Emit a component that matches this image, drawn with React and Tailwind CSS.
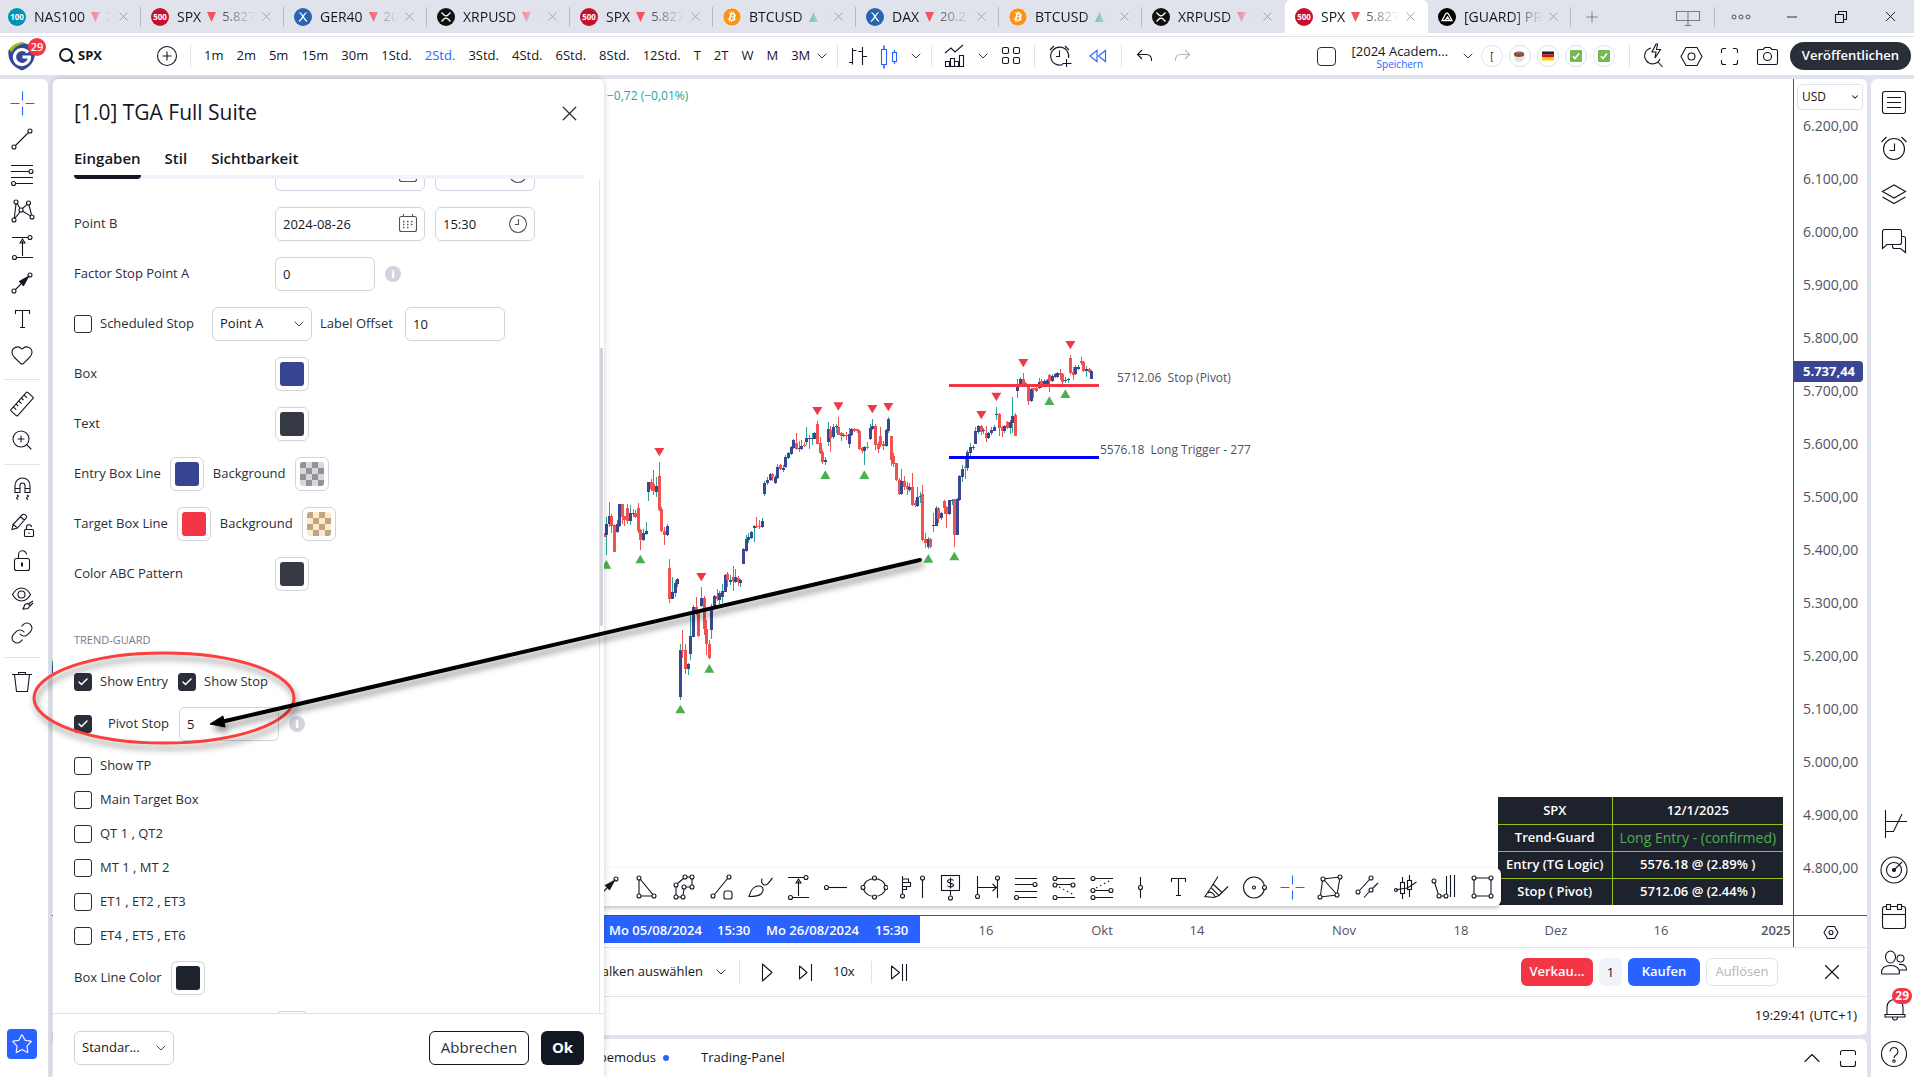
import React, { useState } from 'react';
import { Heart, ZoomIn, Link, Star, X, ChevronDown, ChevronUp, Check, Minus, Plus } from 'lucide-react';
import { FaBitcoin } from 'react-icons/fa';

// =====================================
// ICONS (28 x 28 grid)
// =====================================

const Node = ({ x, y, r = 2 }) => <circle cx={x} cy={y} r={r} />;

const ICONS = {
  cross: <path d="M14.5 2.5v9M14.5 17.5v9M2.5 14.5h9M17.5 14.5h9" />,
  line: <><Node x="22" y="6" /><Node x="6" y="22" /><path d="M7.5 20.5L20.5 7.5" /></>,
  fib: <><path d="M3 4.500h22M3 10.500h18M3 16.500h22M8 22.500h17" /><Node x="23" y="10.500" /><Node x="5.500" y="22.500" /></>,
  pattern: <><Node x="8" y="5" /><Node x="20.500" y="6" /><Node x="13" y="13" /><Node x="6" y="23" /><Node x="24" y="20" /><path d="M8 7L6.300 21M9.200 6.700L12 11.300M14.500 11.500L19 7.400M21 8L23.500 18M14.800 14.200L22.300 18.900M12 15L7 21.200" /></>,
  measure: <><path d="M4 4.500h16M8.500 24.500H25M14.500 23V8M12 10l2.500-4 2.500 4z" /><Node x="22" y="4.500" /><Node x="6.500" y="24.500" /></>,
  arrow: <><Node x="22" y="6" /><Node x="6" y="22" /><path d="M7.500 20.500L14 14" /><path d="M20.500 7.500l-9 5 4 4z" fill="currentColor" /></>,
  text: <path d="M7.500 9V5.500h14V9M14.500 5.500v17M12 22.500h5" />,
  ruler: <g transform="rotate(-48 14 14)"><rect x="1.500" y="9.500" width="25" height="9" rx="1" /><path d="M6 9.500v4M10 9.500v3M14 9.500v4M18 9.500v3M22 9.500v4" /></g>,
  magnet: <path d="M7 17.500V10.500a7.500 7.500 0 0 1 15 0v7h-5v-7a2.500 2.500 0 0 0-5 0v7zM7 13.500h5M17 13.500h5M9 20l1.500 1-2 2 1.500 2M19 20l1.500 1-2 2 1.500 2" />,
  pencilLock: <><path d="M4 18.500l1-5L14.500 3.500c2-1 4.500 1 4 3L9.500 17 4 18.500zM12.500 6l4 3M5 13.500l4 3" /><rect x="16.500" y="18.500" width="9" height="7" rx="1" /><path d="M18.500 18.500v-2a2.500 2.500 0 0 1 5-.5M21 21.500v1.500" /></>,
  lock: <><rect x="6.500" y="11.500" width="15" height="12" rx="2" /><path d="M10.500 11.500V8a4 4 0 0 1 8-.5" /><path d="M14 15.500v4" strokeWidth="2" /></>,
  eye: <><path d="M4.500 11.500C7 7 10 5 13.500 5s6.500 2 9 6.500c-2.500 4.500-5.500 6.500-9 6.500s-6.500-2-9-6.500z" /><circle cx="13.500" cy="11.500" r="3.500" /><path d="M15 26l2-4.500 3-1 2 2-2 3zM21 20.500l4-2.500M22 23l3-3" /></>,
  trash: <path d="M4 6.500h20M10.500 6.500v-2h7v2M6.500 6.500l2 17h11l2-17" />,
  triangle: <><Node x="7" y="5" /><Node x="7" y="23" /><Node x="22" y="23" /><path d="M7 7v14M9 23h11M8.500 6.500L20.700 21.300" /></>,
  path: <><Node x="15" y="4" /><Node x="22" y="4" /><Node x="6" y="12" /><Node x="22" y="14" /><Node x="14" y="14" /><Node x="6" y="24" /><Node x="13" y="24" /><path d="M17 4h3M22 6v6M13.500 5.500L7.500 10.500M16 14h4M6 14v8M8 24h3M13 22l1-6" /></>,
  shapeLine: <><Node x="21" y="4" /><Node x="5" y="23" /><path d="M6.500 21.500L19.500 5.500" /><rect x="16" y="18" width="8" height="8" rx="2" /></>,
  brush: <path d="M3 23.500c1-4 4-11 10-10.500 5 .5 5 5 2 8-3 2.500-7 2.500-12 2.500zM16 5.500c-1 4 0 6 2.500 6.500 4 .5 5-4 8-7" />,
  hline: <><Node x="4.500" y="14.500" /><path d="M7 14.500h18" /></>,
  ellipse: <><ellipse cx="14.500" cy="14.500" rx="11" ry="9" /><g fill="#fff"><Node x="3" y="14.500" /><Node x="26" y="14.500" /><Node x="14.500" y="5" /><Node x="14.500" y="24" /></g></>,
  volume: <><path d="M4.500 3v18M4.500 6h6v3.500h-6M4.500 9.500h8v4h-8M4.500 13.500h4v3h-4M24.500 7v18" /><Node x="4.500" y="23" /><Node x="24.500" y="5" /></>,
  note: <><rect x="5.500" y="2.500" width="18" height="15" /><path d="M14.500 17.500v5" /><Node x="14.500" y="25" /><path d="M17.500 7.500c-1-1.500-6-1.500-6 .8s6 1.500 6 3.800-5 2.300-6 .6M14.500 4.500v11" /></>,
  range: <><path d="M3.500 3v18M23.500 7v18M4 14.500h18M18.500 11l4 3.500-4 3.500" /><Node x="3.500" y="23.500" /><Node x="23.500" y="5" /></>,
  lines2: <><path d="M3 5.500h22M3 11.500h18M3 18.500h22M7 24.500h18" /><Node x="23" y="11.500" /><Node x="4.500" y="24.500" /></>,
  channelA: <><path d="M7 5.500h18M7 11.500h14M7 24.500h18" /><path strokeDasharray="1.500 3" d="M9 14l15 8" /><Node x="5" y="5.500" /><Node x="5" y="12" /><Node x="23" y="12" /><Node x="5" y="24.500" /></>,
  channelB: <><path d="M7 5.500h18M7 17.500h14M7 24.500h18" /><path strokeDasharray="1.500 3" d="M8 15l15-8" /><Node x="5" y="5.500" /><Node x="5" y="17.500" /><Node x="23" y="17.500" /><Node x="5" y="24.500" /></>,
  vline: <><Node x="14.500" y="14.500" /><path d="M14.500 4v8.500M14.500 16.500V25" /></>,
  highlighter: <path d="M3 23.500l6-9 8 8-5 2zM9 14.500L16 3.500M17 22.500l9-9M6 20c2-2 6 0 7 4M11.500 11.500l8.500 8" />,
  target: <><circle cx="14" cy="14.500" r="10.500" /><circle cx="14" cy="14.500" r="1.500" /><g fill="#fff"><Node x="24.500" y="14.500" /></g></>,
  quad: <><Node x="7" y="6" /><Node x="24" y="4" /><Node x="4" y="24" /><Node x="21" y="22" /><path d="M9 5.800L22 4.200M6.500 8L4.500 22M23.700 6L21.300 20M6 23.800l13-1.600M8.500 7.500L20 20.500" /></>,
  parallel: <><Node x="17" y="5" /><Node x="4" y="19" /><Node x="17" y="17" /><path d="M15.500 6.500L5.500 17.500M18.500 15.500L24 10M15.500 18.500L10 24.500" /></>,
  candleTool: <><rect x="8.500" y="9.500" width="4" height="11" /><rect x="15.500" y="7.500" width="4" height="9" /><path d="M10.500 4v5.500M10.500 20.500V26M17.500 2v5.500M17.500 16.500V24M4 17l4.500-1 7-1 9-6" /><Node x="4" y="17" r="1.500" /></>,
  cycles: <><Node x="4" y="8" /><Node x="9" y="23" /><Node x="16" y="23" /><path d="M4.700 10l3.600 11M11 23h3M16.500 21V3M20.500 2v22M24.500 2v22" /></>,
  rect: <><Node x="6" y="5" /><Node x="23" y="5" /><Node x="6" y="23" /><Node x="23" y="23" /><path d="M8 5h13M8 23h13M6 7v14M23 7v14" /></>,
  bars: <path d="M7.500 22.500V6M7.500 20.500H4M7.500 8.500h4M17.500 5v18M17.500 9.500h-4M17.500 14.500H22" />,
  candles: <><rect x="5.500" y="7.500" width="5" height="15" /><path d="M8 3.500v4M8 22.500v4" strokeWidth="1.600" /><rect x="16.500" y="10.500" width="4" height="9" /><path d="M18.500 8v2.500M18.500 19.500V22" /></>,
  indicators: <path d="M4.500 24.500v-5h4v5M9.500 24.500v-8h4v8M13.500 24.500v-5h4v5M18.500 24.500v-11h4v11zM4 24.500h19M4 11l6-5 4 4 8-7" />,
  grid: <><rect x="5.500" y="5.500" width="6" height="6" rx="1.500" /><rect x="16.500" y="5.500" width="6" height="6" rx="1.500" /><rect x="5.500" y="15.500" width="6" height="6" rx="1.500" /><rect x="16.500" y="15.500" width="6" height="6" rx="1.500" /></>,
  alarmPlus: <><path d="M22.500 16A9 9 0 1 0 17 22.500M13.500 8.500v6H10M4 8l4-4M19 4l4 4M20.500 17v8M16.500 21.500h9" /></>,
  rewind: <path d="M13 8.500v11L6 14zM21.500 8.500v11L14.500 14z" />,
  undo: <path d="M11 8l-4.500 4.500L11 17M6.500 12.500h9a5 5 0 0 1 5 5V19" />,
  redo: <path d="M17 8l4.500 4.500L17 17M21.500 12.500h-9a5 5 0 0 0-5 5V19" />,
  quick: <><path d="M12 6a8 8 0 1 0 9 11M19 20l4.500 5" /><path d="M17 2l-4 8h4l-1 6 5.500-8.500h-4l1-5.500z" /></>,
  settings: <><path d="M9 5.500h11l5 9-5 9H9l-5-9z" strokeLinejoin="round" /><circle cx="14.500" cy="14.500" r="3.500" /></>,
  full: <path d="M6.500 11V8.500a2 2 0 0 1 2-2H11M18 6.500h2.500a2 2 0 0 1 2 2V11M22.500 18v2.500a2 2 0 0 1-2 2H18M11 22.500H8.500a2 2 0 0 1-2-2V18" />,
  camera: <><path d="M6 7.500h4l2-2h5l2 2h4a1.500 1.500 0 0 1 1.500 1.500v12a1.500 1.500 0 0 1-1.500 1.500H6A1.500 1.500 0 0 1 4.500 21V9A1.500 1.500 0 0 1 6 7.500z" /><circle cx="14.500" cy="14.500" r="4" /></>,
  list: <><rect x="2.500" y="3.500" width="23" height="22" rx="2.500" /><path d="M7 9.500h14M7 14.500h14M7 19.500h14" /></>,
  alarm: <><circle cx="14" cy="15" r="10.500" /><path d="M14.500 9.500v7H9.500M1.500 8l5-5M21.500 3l5 5" /></>,
  layers: <path d="M2.500 11.500L14 5l11.500 6.500L14 18zM2.500 17L14 23.500 25.500 17" />,
  chat: <path d="M4.500 3.500h15a2 2 0 0 1 2 2v11a2 2 0 0 1-2 2H7l-4.500 4v-17a2 2 0 0 1 2-2zM21.500 10.500h2a2 2 0 0 1 2 2v14l-5-4h-6a2 2 0 0 1-2-2v-2" />,
  dom: <path d="M5.500 0v28M5.500 11.500H27M5.500 21.500h8L22 4" />,
  radar: <><circle cx="14" cy="14" r="13" /><circle cx="14" cy="14" r="7.500" /><circle cx="14" cy="14" r="1.500" fill="currentColor" /><path d="M15 13l7-7" /></>,
  calendar: <><rect x="2.500" y="4.500" width="23" height="22" rx="2.500" /><path d="M2.500 12.500h23" /><rect x="6.500" y="2.500" width="4" height="5" fill="#fff" /><rect x="17.500" y="2.500" width="4" height="5" fill="#fff" /></>,
  people: <><ellipse cx="10.500" cy="9" rx="5" ry="6" /><circle cx="20.500" cy="10.500" r="3.500" /><path d="M1.500 25c0-5 3-7.500 9-7.500s9 2.500 9 7.500c0 .500-.5 1-1 1H2.500c-.5 0-1-.5-1-1zM19 16.500c5-.5 7.500 1.500 7.500 5.500h-7" /></>,
  bell: <path d="M7 20.500V13a7.500 7.500 0 0 1 8-7.500c4.500 0 8 3 8 7.500v7.500M5 20.500h20v2.500H5zM12.500 23.500a2.500 2.500 0 0 0 5 0" />,
  help: <><circle cx="14" cy="14" r="12.500" /><path d="M10 11.500a4 4 0 1 1 6 3.500c-1.500 1-2 1.500-2 3" /><circle cx="14" cy="21" r="1.200" /></>,
  play: <path d="M9.500 6v17L19 14.500z" strokeLinejoin="round" />,
  step: <path d="M8.500 8v13l7.500-6.500zM20.500 6v17" strokeLinejoin="round" />,
  goEnd: <path d="M7.500 8v13l8-6.500zM18.500 6v17M22.500 6v17" strokeLinejoin="round" />,
  maximize: <path d="M6.500 11V8.500a2 2 0 0 1 2-2h11a2 2 0 0 1 2 2V11M21.500 17v3.500a2 2 0 0 1-2 2h-11a2 2 0 0 1-2-2V17" />,
  layout: <path d="M2.500 8.500h23v9h-23zM14 8.500v14M10.500 22.500h7" />,
  restore: <path d="M8.500 11.500h8v8h-8zM11.500 11.500v-3h8v8h-3" />,
  search: <><circle cx="13" cy="13" r="6" strokeWidth="1.800" /><path d="M17.500 17.500l4 4" strokeWidth="1.800" /></>,
  addCircle: <><circle cx="14" cy="14" r="9.500" /><path d="M14 9.500v9M9.500 14h9" /></>,
  date: <><rect x="5.500" y="6.500" width="17" height="15" rx="2" /><path d="M9.500 4v2.500M18.500 4v2.500" /><path d="M9 11.500h11M9 14.500h11M9 17.500h8" strokeDasharray="1.500 2.500" strokeWidth="1.500" /></>,
  clock: <><circle cx="14" cy="14" r="8.500" /><path d="M14.500 9v5.500H11" /></>,
};

const Icon = ({ name, className = '' }) => (
  <svg
    className={`size-7 shrink-0 ${className}`}
    viewBox="0 0 28 28"
    fill="none"
    stroke="currentColor"
    strokeWidth="1.1"
    aria-hidden="true"
  >
    {ICONS[name]}
  </svg>
);

// =====================================
// DATA
// =====================================

const TABS = [
  { logo: 'nas', name: 'NAS100', dir: 'down', price: '21.0' },
  { logo: 'spx', name: 'SPX', dir: 'down', price: '5.827' },
  { logo: 'xetra', name: 'GER40', dir: 'down', price: '20.21' },
  { logo: 'xrp', name: 'XRPUSD', dir: 'down', price: '2.5' },
  { logo: 'spx', name: 'SPX', dir: 'down', price: '5.827' },
  { logo: 'btc', name: 'BTCUSD', dir: 'up', price: '94.5' },
  { logo: 'xetra', name: 'DAX', dir: 'down', price: '20.21' },
  { logo: 'btc', name: 'BTCUSD', dir: 'up', price: '94.5' },
  { logo: 'xrp', name: 'XRPUSD', dir: 'down', price: '2.5' },
  { logo: 'spx', name: 'SPX', dir: 'down', price: '5.827', active: true },
  { logo: 'guard', name: '[GUARD] PRO', dir: null, price: '' },
];

const INTERVALS = ['1m', '2m', '5m', '15m', '30m', '1Std.', '2Std.', '3Std.', '4Std.', '6Std.', '8Std.', '12Std.', 'T', '2T', 'W', 'M', '3M'];

const DRAW_TOOLS = [
  ['cross', 'line', 'fib', 'pattern', 'measure', 'arrow', 'text', 'heart'],
  ['ruler', 'zoom'],
  ['magnet', 'pencilLock', 'lock', 'eye', 'link'],
  ['trash'],
];

const FAVORITES = [
  'arrow', 'triangle', 'path', 'shapeLine', 'brush', 'measure', 'hline', 'ellipse', 'volume', 'note', 'range', 'lines2',
  'channelA', 'channelB', 'vline', 'text', 'highlighter', 'target', 'cross', 'quad', 'parallel', 'candleTool', 'cycles', 'rect',
];

const PRICES = ['6.200,00', '6.100,00', '6.000,00', '5.900,00', '5.800,00', '5.700,00', '5.600,00', '5.500,00', '5.400,00', '5.300,00', '5.200,00', '5.100,00', '5.000,00', '4.900,00', '4.800,00'];

const TIMES = [[934, '16'], [1050, 'Okt'], [1145, '14'], [1292, 'Nov'], [1409, '18'], [1504, 'Dez'], [1609, '16']];

const SUMMARY = [
  ['SPX', '12/1/2025'],
  ['Trend-Guard', 'Long Entry - (confirmed)'],
  ['Entry (TG Logic)', '5576.18 @ (2.89% )'],
  ['Stop ( Pivot)', '5712.06 @ (2.44% )'],
];

// [x, high, low, bodyTop, bodyBottom, up]
const CANDLES = [
  [15, 640, 652, 640, 650, 0], [19, 590, 705, 612, 645, 1], [28, 546, 620, 588, 612, 1], [34, 582, 640, 588, 618, 0],
  [43, 612, 696, 615, 695, 0], [52, 600, 640, 613, 637, 1], [59, 552, 620, 552, 618, 1], [67, 552, 612, 552, 590, 0],
  [74, 588, 618, 588, 600, 0], [82, 552, 612, 563, 603, 0], [91, 555, 615, 580, 603, 1], [100, 568, 590, 578, 582, 1],
  [107, 570, 594, 578, 592, 0], [115, 548, 640, 563, 632, 0], [121, 626, 690, 630, 660, 0], [130, 626, 663, 640, 660, 1],
  [139, 606, 645, 633, 641, 1], [146, 486, 543, 486, 516, 1], [154, 477, 512, 486, 508, 0], [160, 450, 525, 492, 512, 0],
  [169, 471, 530, 498, 516, 1], [178, 426, 572, 468, 570, 0], [184, 560, 637, 567, 632, 0], [193, 622, 675, 633, 645, 0],
  [202, 611, 647, 618, 644, 1], [208, 717, 849, 743, 836, 0], [217, 770, 837, 816, 836, 1], [226, 780, 832, 790, 818, 1],
  [232, 773, 800, 777, 793, 1], [241, 972, 1140, 990, 1131, 1], [248, 930, 1014, 989, 993, 0], [256, 972, 1062, 990, 1047, 0],
  [265, 1029, 1065, 1032, 1047, 1], [271, 880, 1020, 948, 1002, 1], [281, 855, 951, 861, 951, 1], [289, 831, 885, 861, 880, 0],
  [295, 870, 951, 878, 948, 0], [304, 801, 860, 834, 858, 1], [313, 828, 945, 834, 927, 0], [319, 900, 1005, 927, 972, 0],
  [328, 960, 1017, 972, 1014, 0], [334, 852, 957, 867, 930, 1], [343, 826, 862, 828, 860, 1], [352, 806, 842, 828, 838, 0],
  [358, 812, 852, 819, 840, 1], [367, 792, 850, 812, 830, 1], [376, 763, 816, 765, 816, 1], [383, 756, 800, 762, 780, 0],
  [391, 766, 795, 780, 786, 1], [400, 738, 812, 772, 782, 0], [407, 747, 788, 770, 785, 1], [415, 768, 798, 774, 786, 0],
  [422, 777, 800, 780, 788, 1], [430, 684, 732, 687, 732, 1], [439, 645, 696, 657, 693, 1], [445, 640, 670, 651, 660, 1],
  [454, 632, 656, 636, 654, 1], [463, 616, 666, 618, 624, 1], [469, 591, 625, 618, 621, 0], [478, 600, 627, 618, 621, 0],
  [487, 594, 624, 603, 620, 1], [493, 483, 528, 489, 522, 1], [502, 470, 495, 480, 490, 1], [511, 458, 482, 463, 481, 1],
  [518, 458, 484, 461, 470, 0], [526, 465, 491, 471, 489, 1], [533, 432, 476, 441, 474, 1], [541, 433, 450, 436, 448, 0],
  [550, 436, 456, 444, 450, 1], [557, 405, 444, 411, 441, 1], [565, 396, 416, 399, 414, 1], [574, 378, 404, 381, 402, 1],
  [580, 358, 386, 360, 384, 1], [589, 338, 390, 369, 387, 0], [598, 363, 395, 383, 388, 1], [604, 360, 390, 377, 387, 1],
  [613, 366, 380, 374, 378, 0], [619, 320, 375, 354, 366, 1], [628, 345, 387, 354, 357, 1], [637, 338, 375, 353, 356, 1],
  [643, 336, 358, 339, 356, 1], [652, 303, 372, 312, 371, 0], [661, 352, 402, 370, 398, 0], [668, 390, 432, 396, 425, 0],
  [676, 411, 435, 420, 426, 1], [685, 305, 378, 327, 366, 1], [691, 318, 396, 329, 354, 0], [700, 312, 358, 322, 352, 1],
  [709, 312, 340, 318, 322, 1], [715, 291, 345, 321, 344, 0], [724, 335, 363, 339, 348, 0], [730, 340, 352, 345, 348, 1],
  [739, 335, 360, 345, 348, 0], [748, 325, 383, 342, 372, 1], [754, 325, 348, 328, 345, 1], [763, 324, 336, 327, 332, 0],
  [772, 326, 338, 328, 334, 0], [778, 330, 390, 333, 387, 0], [787, 380, 400, 383, 393, 0], [793, 378, 435, 381, 392, 1],
  [802, 365, 388, 380, 384, 0], [811, 311, 360, 324, 357, 1], [817, 297, 330, 318, 326, 1], [826, 312, 390, 319, 375, 0],
  [835, 366, 400, 372, 388, 0], [841, 321, 380, 348, 376, 0], [850, 363, 390, 372, 377, 0], [859, 326, 380, 330, 378, 1],
  [865, 291, 338, 297, 332, 1], [874, 348, 438, 348, 420, 0], [880, 400, 440, 408, 432, 0], [889, 428, 482, 430, 480, 0],
  [898, 474, 524, 480, 521, 0], [904, 447, 525, 483, 521, 1], [913, 468, 510, 483, 502, 0], [922, 485, 525, 498, 508, 0],
  [928, 490, 515, 502, 510, 1], [937, 459, 558, 501, 555, 0], [946, 540, 562, 548, 555, 0], [952, 501, 560, 531, 558, 1],
  [961, 516, 550, 527, 531, 1], [967, 495, 663, 522, 660, 0], [976, 640, 684, 657, 668, 0], [985, 651, 687, 657, 680, 1],
  [991, 654, 684, 656, 681, 0], [1000, 579, 635, 614, 618, 1], [1009, 558, 618, 564, 618, 1], [1015, 562, 610, 564, 597, 0],
  [1024, 575, 600, 578, 594, 1], [1033, 540, 582, 543, 564, 0], [1039, 558, 624, 560, 582, 0], [1048, 540, 584, 541, 582, 1],
  [1057, 537, 555, 540, 543, 1], [1063, 537, 681, 538, 645, 0], [1072, 534, 645, 538, 645, 1], [1078, 465, 542, 468, 540, 1],
  [1087, 435, 486, 447, 471, 1], [1096, 414, 477, 440, 444, 0], [1102, 390, 453, 396, 444, 1], [1111, 370, 408, 381, 399, 1],
  [1120, 375, 390, 380, 384, 1], [1126, 322, 372, 333, 372, 1], [1135, 315, 342, 318, 336, 1], [1144, 315, 345, 317, 336, 0],
  [1150, 325, 342, 329, 333, 1], [1159, 318, 366, 340, 354, 0], [1165, 336, 357, 339, 355, 1], [1174, 320, 345, 330, 340, 1],
  [1183, 315, 333, 321, 333, 1], [1189, 261, 300, 281, 285, 1], [1198, 280, 348, 282, 324, 0], [1207, 318, 350, 320, 334, 0],
  [1213, 315, 340, 318, 334, 1], [1222, 304, 328, 306, 324, 0], [1231, 300, 342, 306, 325, 1], [1237, 231, 340, 288, 308, 1],
  [1246, 279, 348, 285, 348, 0], [1252, 177, 234, 200, 213, 1], [1261, 171, 194, 177, 192, 1], [1270, 159, 198, 177, 195, 0],
  [1277, 186, 202, 190, 200, 0], [1285, 196, 255, 198, 243, 0], [1294, 204, 246, 206, 243, 1], [1300, 203, 235, 205, 210, 0],
  [1309, 200, 216, 205, 212, 0], [1318, 174, 207, 185, 205, 1], [1324, 176, 205, 183, 193, 0], [1333, 178, 195, 183, 192, 1],
  [1342, 178, 198, 181, 195, 1], [1348, 163, 216, 166, 182, 0], [1357, 163, 186, 168, 183, 1], [1366, 158, 174, 163, 172, 1],
  [1372, 155, 174, 160, 172, 1], [1381, 147, 180, 160, 165, 0], [1387, 160, 192, 163, 186, 0], [1396, 170, 190, 179, 183, 1],
  [1405, 175, 189, 177, 180, 1], [1411, 105, 165, 114, 159, 0], [1420, 140, 180, 157, 165, 0], [1426, 135, 165, 141, 163, 1],
  [1435, 135, 150, 141, 147, 1], [1444, 111, 135, 123, 128, 0], [1450, 124, 155, 126, 153, 0], [1459, 138, 170, 147, 153, 1],
  [1468, 145, 160, 147, 155, 0], [1474, 151, 177, 153, 177, 1],
];

const HIGHS = [[178, 396], [304, 771], [652, 273], [715, 259], [817, 267], [865, 261], [1144, 285], [1189, 230], [1270, 129], [1411, 75]];
const LOWS = [[19, 733], [121, 717], [241, 1167], [328, 1045], [676, 464], [793, 464], [985, 715], [1063, 708], [1348, 242], [1396, 221]];

// =====================================
// TOP BARS
// =====================================

const TabLogo = ({ kind }) => {
  if (kind === 'btc') return <FaBitcoin className="size-[18px] shrink-0 rounded-full bg-white text-[#f7931a]" />;
  if (kind === 'nas') return <span className="flex size-[18px] shrink-0 items-center justify-center rounded-full bg-[#0092b7] text-[8px] font-bold text-white">100</span>;
  if (kind === 'spx') return <span className="flex size-[18px] shrink-0 items-center justify-center rounded-full bg-[#c8102e] text-[8px] font-bold text-white">500</span>;
  return (
    <svg viewBox="0 0 18 18" className="size-[18px] shrink-0" fill="none" stroke="#fff" strokeWidth="1.3">
      {kind === 'xetra' && <><circle cx="9" cy="9" r="9" fill="#2a63b0" stroke="none" /><path d="M5.500 4.500c3 1 4 7 7.500 9M12.500 4.500c-3 1-4 7-7.500 9" /></>}
      {kind === 'xrp' && <><circle cx="9" cy="9" r="9" fill="#111" stroke="none" /><path d="M4.500 4.500l2.500 2.500a2.800 2.800 0 0 0 4 0l2.500-2.500M4.500 13.500L7 11a2.800 2.800 0 0 1 4 0l2.500 2.500" /></>}
      {kind === 'guard' && <><circle cx="9" cy="9" r="9" fill="#000" stroke="none" /><path d="M4 12.500h10L10.500 6c-.8-1.300-2.200-1.300-3 0L4 12.500zM7.500 12l2-3 2 3" /></>}
    </svg>
  );
};

const TabBar = () => (
  <div className="flex h-[33px] items-stretch bg-[#e0e3eb] text-[#131722]">
    {TABS.map((tab, i) => (
      <div
        key={i}
        className={`flex w-[143px] shrink-0 items-center pl-[10px] ${i === 0 ? '-ml-[2px]' : ''} ${tab.active ? 'rounded-t-md bg-white' : ''}`}
      >
        <TabLogo kind={tab.logo} />
        <a href="#tab" className="ml-2 flex w-[78px] items-center gap-[6px] overflow-hidden whitespace-nowrap text-[14px] [mask-image:linear-gradient(to_right,black_60%,transparent)]">
          <span>{tab.name}</span>
          {tab.dir && (
            <svg viewBox="0 0 9 10" className="h-[10px] w-[9px] shrink-0">
              {tab.dir === 'up' ? <path d="M4.500 0L9 10H0z" fill="#22ab94" /> : <path d="M0 0h9L4.500 10z" fill="#f7525f" />}
            </svg>
          )}
          <span className="text-[13px] text-[#50535e]">{tab.price}</span>
        </a>
        <button aria-label="Tab schließen" className="ml-1 text-[#9598a1]"><X size={15} strokeWidth={1.3} /></button>
        {!tab.active && i !== 8 && <span className="ml-auto h-5 w-px bg-[#b8bbc6]" />}
      </div>
    ))}
    <button aria-label="Neuer Tab" className="ml-3 text-[#787b86]"><Plus size={18} strokeWidth={1.3} /></button>
    <div className="ml-auto flex items-center text-[#50535e]">
      <button aria-label="Layout" className="mr-3"><Icon name="layout" className="text-[#787b86]" /></button>
      <span className="h-5 w-px bg-[#b8bbc6]" />
      <button aria-label="Menü" className="w-[52px]">
        <svg viewBox="0 0 20 6" className="mx-auto h-[6px] w-5" fill="none" stroke="currentColor"><circle cx="3" cy="3" r="2" /><circle cx="10" cy="3" r="2" /><circle cx="17" cy="3" r="2" /></svg>
      </button>
      <button aria-label="Minimieren" className="flex w-[49px] justify-center text-[#131722]"><Minus size={16} strokeWidth={1.3} /></button>
      <button aria-label="Verkleinern" className="flex w-[50px] justify-center text-[#131722]"><Icon name="restore" /></button>
      <button aria-label="Schließen" className="flex w-12 justify-center text-[#131722]"><X size={17} strokeWidth={1.3} /></button>
    </div>
  </div>
);

const Sep = () => <span className="h-[22px] w-px shrink-0 bg-[#e0e3eb]" />;

const Round = ({ children }) => (
  <button className="flex size-[22px] shrink-0 items-center justify-center rounded-full border border-[#e0e3eb] text-[10px]">{children}</button>
);

const TickEmoji = () => (
  <svg viewBox="0 0 12 12" className="size-3"><rect width="12" height="12" rx="1" fill="#76b852" /><path d="M3 6.300l2 2.200L9 3.500" fill="none" stroke="#fff" strokeWidth="1.700" /></svg>
);

const Toolbar = () => {
  const [interval, setInterval] = useState('2Std.');

  return (
    <header className="mt-[3px] flex h-[39px] items-center border-t border-[#e0e3eb] text-[#131722]">
      {/* Logo + notification counter */}
      <div className="relative ml-[7px] size-[30px] shrink-0">
        <svg viewBox="0 0 30 30" className="size-[30px]">
          <path d="M15 1c5 2.500 8 3 13 3.500C29.500 17 26 25 15 29.500 4 25 .5 18 1.500 9z" fill="#38469a" />
          <path d="M2 9C5 4 9 2 15 1l3 1.500C12 4 8 5 5 11z" fill="#95c11f" />
          <path d="M21 11.500A7.500 7.500 0 1 0 22.500 16H15.500" fill="none" stroke="#fff" strokeWidth="3.200" />
        </svg>
        <span className="absolute -top-[3px] -right-[9px] flex size-[18px] items-center justify-center rounded-full bg-[#f23645] text-[11px] font-semibold text-white">29</span>
      </div>
      <button className="ml-4 flex w-[100px] items-center text-[13px] font-bold"><Icon name="search" className="-mr-[3px]" />SPX</button>
      <button aria-label="Symbol hinzufügen"><Icon name="addCircle" /></button>
      <span className="ml-[9px] flex"><Sep /></span>
      <nav className="ml-[13px] flex items-center gap-[13px] text-[13px]">
        {INTERVALS.map((label) => (
          <button key={label} onClick={() => setInterval(label)} className={interval === label ? 'text-[#2962ff]' : ''}>{label}</button>
        ))}
      </nav>
      <div className="ml-1 flex items-center">
        <ChevronDown size={16} strokeWidth={1.3} />
        <span className="mx-[7px] flex"><Sep /></span>
        <button aria-label="Balken"><Icon name="bars" /></button>
        <button aria-label="Kerzen" className="ml-[3px] text-[#2962ff]"><Icon name="candles" /></button>
        <ChevronDown className="ml-1" size={16} strokeWidth={1.3} />
        <span className="mx-[7px] flex"><Sep /></span>
        <button aria-label="Indikatoren" className="ml-[2px]"><Icon name="indicators" /></button>
        <ChevronDown className="ml-[6px]" size={16} strokeWidth={1.3} />
        <button aria-label="Vorlagen" className="ml-[6px]"><Icon name="grid" /></button>
        <span className="ml-[9px] mr-[11px] flex"><Sep /></span>
        <button aria-label="Alarm"><Icon name="alarmPlus" /></button>
        <button aria-label="Replay" className="ml-[10px] text-[#2962ff]"><Icon name="rewind" /></button>
        <span className="mx-[9px] flex"><Sep /></span>
        <button aria-label="Rückgängig"><Icon name="undo" /></button>
        <button aria-label="Wiederholen" className="ml-[9px] text-[#b2b5be]"><Icon name="redo" /></button>
      </div>
      <div className="ml-auto flex shrink-0 items-center">
        <input type="checkbox" aria-label="Layout" className="size-[19px] appearance-none rounded border border-[#2a2e39]" />
        <div className="ml-[15px] w-[98px] text-center whitespace-nowrap">
          <div className="text-[13px] leading-[16px]">[2024 Academ...</div>
          <a href="#save" className="block text-[10px] leading-[11px] text-[#2962ff]">Speichern</a>
        </div>
        <ChevronDown className="mr-[5px] ml-[11px]" size={16} strokeWidth={1.3} />
        <div className="flex gap-[6px]">
          <Round>[</Round>
          <Round>
            <svg viewBox="0 0 14 14" className="size-[13px]"><path d="M1 5c0 6 2 8 6 8s5-3 5-8z" fill="#dfe3ea" /><circle cx="12" cy="8" r="1.500" fill="none" stroke="#dfe3ea" /><ellipse cx="6.500" cy="4.500" rx="5.500" ry="3" fill="#8a4b38" /><path d="M4 3.500c2-2 4 1 5 0" stroke="#c98d78" fill="none" /></svg>
          </Round>
          <Round>
            <svg viewBox="0 0 12 9" className="h-[10px] w-3"><path d="M0 0h12v3H0z" fill="#222" /><path d="M0 3h12v3H0z" fill="#dd0f0f" /><path d="M0 6h12v3H0z" fill="#ffc91a" /></svg>
          </Round>
          <Round><TickEmoji /></Round>
          <Round><TickEmoji /></Round>
        </div>
        <span className="ml-[14px] mr-[9px] flex"><Sep /></span>
        <button aria-label="Schnellsuche"><Icon name="quick" /></button>
        <button aria-label="Einstellungen" className="ml-[10px]"><Icon name="settings" /></button>
        <button aria-label="Vollbild" className="ml-[10px]"><Icon name="full" /></button>
        <button aria-label="Snapshot" className="ml-[10px]"><Icon name="camera" /></button>
        <button className="mr-[3px] ml-[9px] h-7 rounded-full bg-[#2a2e39] px-3 text-[13px] font-semibold text-white">Veröffentlichen</button>
      </div>
    </header>
  );
};

// =====================================
// SIDE BARS
// =====================================

const LUCIDE_TOOLS = { heart: Heart, zoom: ZoomIn, link: Link };

const LeftTools = () => (
  <aside className="flex w-12 shrink-0 flex-col rounded-tr-md bg-white pt-[6px] pr-1 text-[#131722]">
    {DRAW_TOOLS.map((group, g) => (
      <React.Fragment key={g}>
        {g > 0 && <span className="mx-1 my-[6px] h-px bg-[#e0e3eb]" />}
        {group.map((name) => {
          const Lucide = LUCIDE_TOOLS[name];
          return (
            <button key={name} aria-label={name} className={`flex h-9 items-center justify-center ${name === 'cross' ? 'text-[#2962ff]' : ''}`}>
              {Lucide ? <Lucide size={24} strokeWidth={1.1} /> : <Icon name={name} />}
            </button>
          );
        })}
      </React.Fragment>
    ))}
    <button aria-label="Favoriten" className="mx-[7px] mt-auto mb-[18px] flex h-[30px] items-center justify-center rounded bg-[#2962ff] text-white">
      <Star size={22} strokeWidth={1.2} />
    </button>
  </aside>
);

const RightTools = () => (
  <aside className="flex w-[43px] shrink-0 flex-col justify-between rounded-tl-md bg-white text-[#131722]">
    <div className="flex flex-col">
      {['list', 'alarm', 'layers', 'chat'].map((name) => (
        <button key={name} aria-label={name} className="flex h-[46px] items-center justify-center pl-[3px]">
          <Icon name={name} />
        </button>
      ))}
    </div>
    <div className="flex flex-col">
      {['dom', 'radar', 'calendar', 'people', 'bell', 'help'].map((name) => (
        <button key={name} aria-label={name} className="relative flex h-[46px] items-center justify-center pl-[3px]">
          <Icon name={name} />
          {name === 'bell' && (
            <span className="absolute top-[3px] right-[2px] flex h-4 items-center rounded-full bg-[#f23645] px-[3px] text-[12px] font-bold text-white">29</span>
          )}
        </button>
      ))}
    </div>
  </aside>
);

// =====================================
// CHART
// =====================================

const Chart = () => (
  <svg className="block size-full" aria-label="SPX Chart">
    <text x="555" y="21" fontSize="12" fill="#26a69a">−0,72 (−0,01%)</text>
    <rect x="0" y="582" width="1" height="4" fill="#26a69a" />
    <rect x="0" y="586" width="2" height="8" fill="#3a4694" />
    <g transform="translate(548 241) scale(0.33333)">
      <g shapeRendering="crispEdges">
        {CANDLES.map(([x, high, low, top, bottom, up]) => (
          <g key={x}>
            <rect x={x - 1.5} y={high} width="3" height={low - high} fill={up ? '#26a69a' : '#ef5350'} />
            <rect x={x - 4.5} y={top} width="9" height={Math.max(bottom - top, 3)} fill={up ? '#3a4694' : '#ef5350'} />
          </g>
        ))}
      </g>
      {HIGHS.map(([x, y]) => <path key={x} d={`M${x - 15} ${y - 12}h30l-15 25z`} fill="#f23645" />)}
      {LOWS.map(([x, y]) => <path key={x} d={`M${x - 15} ${y + 13}h30l-15-26z`} fill="#4caf50" />)}
      <path d="M1047 196.500h450" stroke="#f23645" strokeWidth="9" />
      <path d="M1047 412.500h450" stroke="#0000ff" strokeWidth="9" />
    </g>
    <g fontSize="12" fill="#50535e">
      <text x="1065" y="303" xmlSpace="preserve">5712.06  Stop (Pivot)</text>
      <text x="1048" y="375" xmlSpace="preserve">5576.18  Long Trigger - 277</text>
    </g>
  </svg>
);

const PriceAxis = () => (
  <div className="relative flex w-[74px] shrink-0 flex-col border-l border-[#50535e] text-[#50535e]">
    <div className="relative mx-[3px] mt-1">
      <select aria-label="Währung" className="h-[26px] w-[66px] appearance-none rounded border border-[#e0e3eb] pl-1 text-[12px] text-[#131722]">
        <option>USD</option>
      </select>
      <ChevronDown className="pointer-events-none absolute top-[9px] left-[53px] text-[#131722]" size={10} strokeWidth={2.5} />
    </div>
    <div className="mt-[6px] flex flex-col gap-[33px] pl-[9px] text-[14px]">
      {PRICES.map((p) => <span key={p} className="h-5 leading-5">{p}</span>)}
    </div>
    <span className="absolute top-[282px] left-0 h-[21px] w-[69px] rounded-r-sm bg-[#3a4694] pl-[9px] text-[13px] font-bold leading-[21px] text-white">5.737,44</span>
  </div>
);

const Favorites = () => (
  <div className="absolute right-[292px] bottom-[9px] flex h-[38px] items-center rounded-md bg-white text-[#131722] shadow-[0_2px_4px_rgba(0,0,0,0.25)]">
    {FAVORITES.map((name, i) => (
      <button key={i} aria-label={name} className={`flex w-[38px] justify-center ${name === 'cross' ? 'text-[#2962ff]' : ''}`}>
        <Icon name={name} />
      </button>
    ))}
  </div>
);

const Summary = () => (
  <table className="absolute right-[10px] bottom-[10px] w-[285px] table-fixed border-collapse bg-[#1e222d] text-center text-[13px] font-semibold text-white">
    <tbody>
      {SUMMARY.map(([label, value], i) => (
        <tr key={label} className={i > 0 ? 'border-t border-[#95c11f]' : ''}>
          <th className="h-[27px] w-[114px] whitespace-nowrap border-r border-[#95c11f] p-0 font-semibold">{label}</th>
          <td className={`whitespace-nowrap p-0 ${i === 1 ? 'text-[14px] font-normal text-[#4caf50]' : ''}`}>{value}</td>
        </tr>
      ))}
    </tbody>
  </table>
);

const TimeAxis = () => (
  <div className="flex h-8 shrink-0 border-t border-[#50535e]">
    <div className="relative min-w-0 flex-1">
      <svg className="block size-full" fontSize="13" fill="#50535e" aria-label="Zeitachse">
        <rect x="552" y="0" width="316" height="27" fill="#2962ff" />
        <g fill="#fff" fontWeight="600">
          <text x="557" y="19">Mo 05/08/2024</text>
          <text x="665" y="19">15:30</text>
          <text x="714" y="19">Mo 26/08/2024</text>
          <text x="823" y="19">15:30</text>
        </g>
        {TIMES.map(([x, label]) => <text key={x} x={x} y="19" textAnchor="middle">{label}</text>)}
        <text x="1709" y="19" fontWeight="600">2025</text>
      </svg>
    </div>
    <button aria-label="Achseneinstellungen" className="flex w-[74px] items-center justify-center border-l border-[#50535e] text-[#131722]">
      <svg viewBox="0 0 20 20" className="size-5" fill="none" stroke="currentColor" strokeWidth="1.1" strokeLinejoin="round">
        <path d="M6.500 4.500h7l3.500 6-3.500 6h-7l-3.500-6z" />
        <circle cx="10" cy="10.500" r="2" />
      </svg>
    </button>
  </div>
);

const ChartColumn = () => (
  <main className="flex min-w-0 flex-1 flex-col text-[#131722]">
    <section className="flex min-h-0 flex-1 flex-col rounded-t-md rounded-b-md bg-white">
      <div className="flex min-h-0 flex-1">
        <div className="relative min-w-0 flex-1">
          <Chart />
          <Summary />
          <Favorites />
        </div>
        <PriceAxis />
      </div>
      <TimeAxis />

      {/* Replay controls */}
      <div className="flex h-[49px] shrink-0 items-center border-t border-[#e0e3eb] text-[13px]">
        <button className="w-[651px] text-right">Balken auswählen</button>
        <ChevronDown className="ml-[10px]" size={16} strokeWidth={1.3} />
        <span className="mr-[13px] ml-[10px] flex"><Sep /></span>
        <button aria-label="Abspielen"><Icon name="play" /></button>
        <button aria-label="Vorwärts" className="ml-[10px]"><Icon name="step" /></button>
        <button className="ml-[14px]">10x</button>
        <span className="mr-[12px] ml-[16px] flex"><Sep /></span>
        <button aria-label="Zum Ende"><Icon name="goEnd" /></button>
        <div className="mr-[22px] ml-auto flex items-center">
          <button className="h-7 w-[72px] rounded-md bg-[#f23645] font-semibold text-white">Verkau...</button>
          <span className="mx-[6px] h-7 w-[23px] rounded-md bg-[#f0f3fa] text-center leading-7">1</span>
          <button className="h-7 w-[72px] rounded-md bg-[#2962ff] font-semibold text-white">Kaufen</button>
          <button className="ml-[6px] h-7 w-[72px] rounded-md border border-[#e0e3eb] text-[#b2b5be]" disabled>Auflösen</button>
          <button aria-label="Replay schließen" className="ml-[41px]"><X size={26} strokeWidth={1.1} /></button>
        </div>
      </div>
      <div className="flex h-[39px] shrink-0 items-center justify-end border-t border-[#e0e3eb] pr-[10px] text-[13px]">19:29:41 (UTC+1)</div>
    </section>

    <footer className="mt-1 flex h-[38px] shrink-0 items-center rounded-t-md bg-white text-[13px]">
      <a href="#replay" className="w-[604px] text-right">Wiedergabemodus</a>
      <span className="ml-[7px] size-[6px] rounded-full bg-[#2962ff]" />
      <a href="#panel" className="ml-[32px]">Trading-Panel</a>
      <button aria-label="Aufklappen" className="mr-2 ml-auto"><ChevronUp size={28} strokeWidth={1} /></button>
      <button aria-label="Maximieren" className="mr-[5px]"><Icon name="maximize" /></button>
    </footer>
  </main>
);

// =====================================
// SETTINGS DIALOG
// =====================================

const FIELD = 'h-[34px] w-[100px] rounded-md border border-[#d1d4dc] px-[7px] text-[13px] text-[#131722]';

const CheckBox = ({ label, checked = false, className = '', gap = 'gap-2' }) => {
  const [on, setOn] = useState(checked);

  return (
    <label className={`flex items-center ${gap} ${className}`}>
      <span className="relative flex size-[18px]">
        <input
          type="checkbox"
          checked={on}
          onChange={() => setOn(!on)}
          className="size-[18px] appearance-none rounded-[3px] border border-[#2a2e39] checked:bg-[#2a2e39]"
        />
        {on && <Check className="pointer-events-none absolute top-[3px] left-[3px] text-white" size={12} strokeWidth={3} />}
      </span>
      {label}
    </label>
  );
};

const Checker = ({ dark, light }) => (
  <svg viewBox="0 0 4 4" className="size-6 rounded-[3px]" shapeRendering="crispEdges">
    <rect width="4" height="4" fill={light} />
    <path d="M0 0h1v1H0zM2 0h1v1H2zM1 1h1v1H1zM3 1h1v1H3zM0 2h1v1H0zM2 2h1v1H2zM1 3h1v1H1zM3 3h1v1H3z" fill={dark} />
  </svg>
);

const Swatch = ({ label, color, children }) => (
  <button aria-label={label} className="flex size-[34px] items-center justify-center rounded-md border border-[#d1d4dc]">
    {children || <span className={`size-6 rounded-[3px] ${color}`} />}
  </button>
);

const Info = () => (
  <span className="flex size-4 items-center justify-center rounded-full bg-[#d1d4dc] text-[11px] font-extrabold text-white">i</span>
);

const DateRow = ({ label, id, date, time }) => (
  <div className="flex h-[50px] items-center">
    <label htmlFor={id} className="w-[201px]">{label}</label>
    <span className="relative">
      <input id={id} defaultValue={date} className={`${FIELD} !w-[150px]`} />
      <Icon name="date" className="absolute top-[3px] right-[3px] text-[#50535e]" />
    </span>
    <span className="relative ml-[10px]">
      <input aria-label={`${label} Zeit`} defaultValue={time} className={FIELD} />
      <Icon name="clock" className="absolute top-[3px] right-[3px] text-[#50535e]" />
    </span>
  </div>
);

const Dialog = () => (
  <div
    role="dialog"
    aria-label="[1.0] TGA Full Suite"
    className="absolute inset-y-0 left-[53px] flex w-[551px] flex-col rounded-t-md bg-white text-[13px] text-[#2a2e39] shadow-[0_0_6px_rgba(0,0,0,0.2)]"
  >
    <div className="mt-[18px] flex h-8 items-center justify-between pr-[22px] pl-[21px]">
      <h1 className="text-[21px] text-[#131722]">[1.0] TGA Full Suite</h1>
      <button aria-label="Schließen"><X size={25} strokeWidth={1.2} /></button>
    </div>
    <div className="mt-[16px] mr-[20px] ml-[21px] flex shrink-0 gap-[24px] border-b-4 border-[#f0f3fa] text-[15px] font-semibold text-[#131722]">
      <button className="-mb-1 h-[34px] rounded-sm border-b-4 border-[#131722] pb-1">Eingaben</button>
      <button className="h-[30px] pb-1">Stil</button>
      <button className="h-[30px] pb-1">Sichtbarkeit</button>
    </div>

    <div className="relative min-h-0 flex-1 overflow-hidden pl-[21px]">
      <div className="-mt-[30px]">
        <DateRow label="Point A" id="pa" date="2024-08-05" time="15:30" />
        <DateRow label="Point B" id="pb" date="2024-08-26" time="15:30" />
        <div className="flex h-[50px] items-center">
          <label htmlFor="factor" className="w-[201px]">Factor Stop Point A</label>
          <input id="factor" defaultValue="0" className={FIELD} />
          <span className="ml-[10px]"><Info /></span>
        </div>
        <div className="flex h-[50px] items-center">
          <CheckBox label="Scheduled Stop" className="w-[138px]" />
          <span className="relative">
            <select aria-label="Scheduled Stop Point" className={`${FIELD} appearance-none`}><option>Point A</option></select>
            <ChevronDown className="pointer-events-none absolute top-[9px] right-[5px]" size={16} strokeWidth={1.3} />
          </span>
          <label htmlFor="offset" className="ml-2 w-[85px]">Label Offset</label>
          <input id="offset" defaultValue="10" className={FIELD} />
        </div>
        <div className="flex h-[50px] items-center"><span className="w-[201px]">Box</span><Swatch label="Box" color="bg-[#364591]" /></div>
        <div className="flex h-[50px] items-center"><span className="w-[201px]">Text</span><Swatch label="Text" color="bg-[#363a45]" /></div>
        <div className="flex h-[50px] items-center gap-[9px]">
          <span>Entry Box Line</span><Swatch label="Entry Box Line" color="bg-[#364591]" />
          <span>Background</span><Swatch label="Background"><Checker dark="#929399" light="#d6d7da" /></Swatch>
        </div>
        <div className="flex h-[50px] items-center gap-[9px]">
          <span>Target Box Line</span><Swatch label="Target Box Line" color="bg-[#f23645]" />
          <span>Background</span><Swatch label="Background"><Checker dark="#bda686" light="#ffe9c8" /></Swatch>
        </div>
        <div className="flex h-[50px] items-center"><span className="w-[201px]">Color ABC Pattern</span><Swatch label="Color ABC Pattern" color="bg-[#363a45]" /></div>

        <h2 className="mt-[31px] h-5 text-[11px] leading-5 text-[#787b86]">TREND-GUARD</h2>
        <div className="mt-[11px] flex h-[42px] items-center gap-[10px]">
          <CheckBox label="Show Entry" checked />
          <CheckBox label="Show Stop" checked />
        </div>
        <div className="flex h-[42px] items-center gap-[10px]">
          <CheckBox label="Pivot Stop" checked gap="gap-4" />
          <input aria-label="Pivot Stop Wert" defaultValue="5" className={FIELD} />
          <Info />
        </div>
        <CheckBox label="Show TP" className="h-[42px]" />
        <div className="-mt-1">
          {['Main Target Box', 'QT 1 , QT2', 'MT 1 , MT 2', 'ET1 , ET2 , ET3', 'ET4 , ET5 , ET6'].map((label) => (
            <CheckBox key={label} label={label} className="h-[34px]" />
          ))}
        </div>
        <div className="flex h-[50px] items-center gap-[9px]"><span>Box Line Color</span><Swatch label="Box Line Color" color="bg-[#1e222d]" /></div>
        <div className="flex h-[50px] items-center"><span className="w-[201px]">Target Color</span><Swatch label="Target Color" color="bg-[#363a45]" /></div>
      </div>
      <span className="absolute inset-y-0 right-0 w-[5px] border-l border-[#e0e3eb]" />
      <span className="absolute top-[169px] right-[1px] h-[278px] w-[3px] bg-[#d1d4dc]" />
    </div>

    <div className="flex h-16 shrink-0 items-center border-t border-[#e0e3eb] pt-1 pr-[20px] pl-[21px]">
      <span className="relative">
        <select aria-label="Standardeinstellungen" className={`${FIELD} appearance-none`}><option>Standar...</option></select>
        <ChevronDown className="pointer-events-none absolute top-[9px] right-[5px]" size={16} strokeWidth={1.3} />
      </span>
      <button className="ml-auto h-[34px] w-[100px] rounded-md border border-[#131722] text-[15px]">Abbrechen</button>
      <button className="ml-3 h-[34px] w-[43px] rounded-md bg-[#131722] text-[15px] font-bold text-white">Ok</button>
    </div>
  </div>
);

// Hand-drawn hint: circled option and arrow from the pivot low
const Annotation = () => (
  <svg className="pointer-events-none absolute top-0 left-0 h-full w-[960px]" fill="none" aria-hidden="true">
    <g className="drop-shadow-[2px_5px_3px_rgba(0,0,0,0.45)]">
      <ellipse cx="164" cy="619" rx="130" ry="45" stroke="#fb3f3f" strokeWidth="3" />
    </g>
    <g className="drop-shadow-[2px_5px_3px_rgba(0,0,0,0.45)]">
      <path d="M920 481L221 643" stroke="#000" strokeWidth="4" strokeLinecap="round" />
      <path d="M210 645l13-8 2 11z" fill="#000" stroke="#000" />
    </g>
  </svg>
);

const App = () => (
  <div className="flex h-screen flex-col overflow-hidden bg-white font-['Open_Sans',sans-serif]">
    <TabBar />
    <Toolbar />
    <div className="relative flex min-h-0 flex-1 gap-1 bg-[#e0e3eb] pt-1">
      <LeftTools />
      <ChartColumn />
      <RightTools />
      <div className="absolute inset-0 top-1">
        <Dialog />
        <Annotation />
      </div>
    </div>
  </div>
);

export default App;
